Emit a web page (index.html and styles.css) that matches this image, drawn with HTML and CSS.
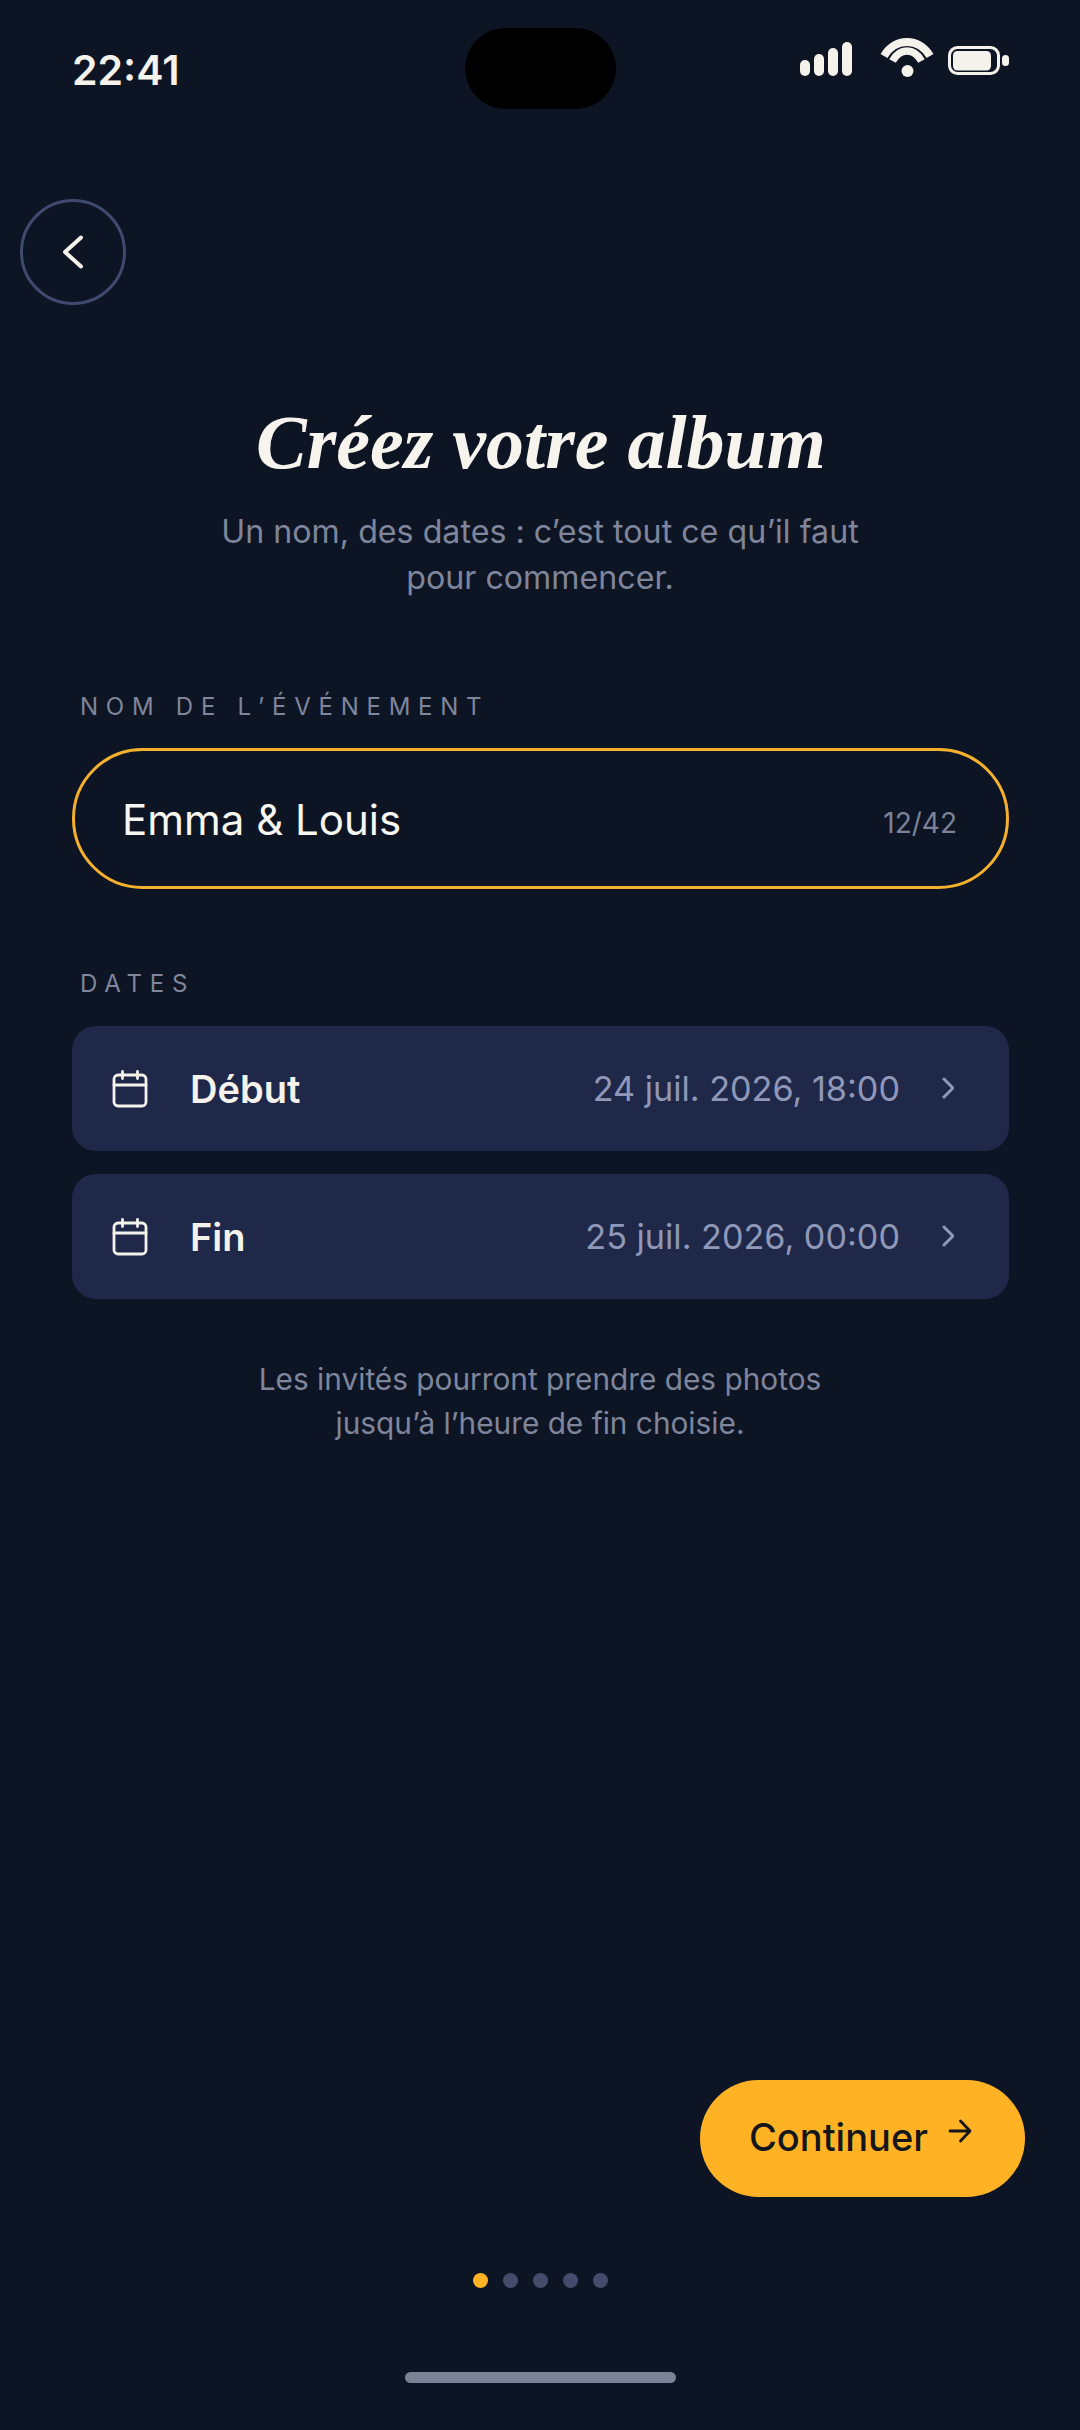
FILE: index.html
```html
<!DOCTYPE html>
<html lang="fr">
<head>
<meta charset="utf-8">
<title>Créez votre album</title>
<link rel="stylesheet" href="styles.css">
</head>
<body>
<main class="screen">
  <header class="status">
    <span class="time">22:41</span>
    <div class="island"></div>
    <div class="status-icons">
      <svg class="ic-signal" width="52" height="34" viewBox="0 0 52 34" fill="#f5f2ec"><rect x="0" y="18" width="10" height="16" rx="5"/><rect x="14" y="12" width="10" height="22" rx="5"/><rect x="28" y="6" width="10" height="28" rx="5"/><rect x="42" y="0" width="10" height="34" rx="5"/></svg>
      <svg class="ic-wifi" width="54" height="40" viewBox="0 0 54 40" fill="none" stroke="#f5f2ec"><path d="M4 18C15 -0.670 39 -0.670 50 18" stroke-width="8"/><path d="M12.500 23C20 9.700 34 9.700 41.500 23" stroke-width="7.500"/><circle cx="27.500" cy="33" r="6" fill="#f5f2ec" stroke="none"/></svg>
      <svg class="ic-batt" width="61" height="29" viewBox="0 0 61 29"><rect x="1.500" y="1.500" width="49" height="26" rx="8" fill="none" stroke="#f5f2ec" stroke-width="3"/><rect x="5" y="5" width="38" height="19.500" rx="4.500" fill="#f5f2ec"/><rect x="54" y="9" width="7" height="11" rx="3.500" fill="#f5f2ec"/></svg>
    </div>
  </header>

  <button class="back" aria-label="Retour">
    <svg width="22" height="36" viewBox="0 0 22 36" fill="none" stroke="#f5f2ec" stroke-width="4" stroke-linecap="round" stroke-linejoin="round"><path d="M19 3.500 3 18l16 14.500"/></svg>
  </button>

  <h1 class="title">Créez votre album</h1>
  <p class="subtitle">Un nom, des dates : c’est tout ce qu’il faut<br>pour commencer.</p>

  <label class="label label-name">NOM DE L’ÉVÉNEMENT</label>
  <div class="field">
    <span class="field-value">Emma &amp; Louis</span>
    <span class="counter">12/42</span>
  </div>

  <label class="label label-dates">DATES</label>
  <div class="rows">
    <div class="row">
      <svg class="cal" width="36" height="38" viewBox="0 0 36 38" fill="none" stroke="#f5f2ec" stroke-width="2.800" stroke-linecap="round" stroke-linejoin="round"><rect x="2" y="5" width="32" height="31" rx="4"/><path d="M2 15h32M10.500 1.500v7M25.500 1.500v7"/></svg>
      <span class="row-name">Début</span>
      <span class="row-value">24 juil. 2026, 18:00</span>
      <svg class="chev" width="12" height="22" viewBox="0 0 12 22" fill="none" stroke="#8f98b8" stroke-width="3" stroke-linecap="round" stroke-linejoin="round"><path d="M2 2l9 9-9 9"/></svg>
    </div>
    <div class="row">
      <svg class="cal" width="36" height="38" viewBox="0 0 36 38" fill="none" stroke="#f5f2ec" stroke-width="2.800" stroke-linecap="round" stroke-linejoin="round"><rect x="2" y="5" width="32" height="31" rx="4"/><path d="M2 15h32M10.500 1.500v7M25.500 1.500v7"/></svg>
      <span class="row-name">Fin</span>
      <span class="row-value">25 juil. 2026, 00:00</span>
      <svg class="chev" width="12" height="22" viewBox="0 0 12 22" fill="none" stroke="#8f98b8" stroke-width="3" stroke-linecap="round" stroke-linejoin="round"><path d="M2 2l9 9-9 9"/></svg>
    </div>
  </div>

  <p class="note">Les invités pourront prendre des photos<br>jusqu’à l’heure de fin choisie.</p>

  <button class="cta">
    <span class="cta-text">Continuer</span>
    <svg class="arrow" width="24" height="24" viewBox="0 0 24 24" fill="none" stroke="#14161c" stroke-width="2.800" stroke-linecap="round" stroke-linejoin="round"><path d="M2 12h20M12.500 2 22 12l-9.500 10"/></svg>
  </button>

  <div class="dots">
    <i class="dot dot-on"></i><i class="dot"></i><i class="dot"></i><i class="dot"></i><i class="dot"></i>
  </div>
  <div class="home"></div>
</main>
</body>
</html>
```

FILE: styles.css
```css
* { box-sizing: border-box; }
html, body { margin: 0; padding: 0; }
body { background: #0d1524; }
.screen {
  width: 1080px;
  height: 2430px;
  background: #0d1524;
  font-family: "Inter", "Liberation Sans", sans-serif;
  color: #f5f2ec;
  display: flex;
  flex-direction: column;
  overflow: hidden;
}
.status {
  height: 199px;
  position: relative;
  display: flex;
  justify-content: space-between;
  align-items: flex-start;
  padding: 0 71px 0 72px;
}
.time {
  font-size: 41px;
  font-weight: 600;
  line-height: 47px;
  margin-top: 47px;
}
.island {
  position: absolute;
  left: 465px;
  top: 28px;
  width: 151px;
  height: 81px;
  border-radius: 41px;
  background: #000;
}
.status-icons {
  display: flex;
  align-items: flex-start;
  margin-top: 38px;
}
.ic-signal { margin-top: 4px; margin-right: 28px; }
.ic-wifi { margin-right: 14px; }
.ic-batt { margin-top: 8px; }
.back {
  align-self: flex-start;
  margin-left: 20px;
  width: 106px;
  height: 106px;
  padding: 0;
  border-radius: 50%;
  border: 3px solid #3f4a6e;
  background: transparent;
  display: flex;
  align-items: center;
  justify-content: center;
}
.title {
  margin: 97px 0 0;
  padding-left: 2px;
  text-align: center;
  font-family: "Liberation Serif", serif;
  font-style: italic;
  font-weight: 700;
  font-size: 76px;
  line-height: 80px;
  color: #f7f4ee;
}
.subtitle {
  margin: 26.500px 0 0;
  text-align: center;
  font-size: 32.200px;
  line-height: 46.500px;
  color: #7f859b;
}
.label {
  display: block;
  margin-left: 80px;
  font-size: 24px;
  line-height: 30px;
  letter-spacing: 7.750px;
  color: #7f859b;
}
.label-name { margin-top: 90.500px; }
.label-dates { margin-top: 80px; }
.field {
  margin: 26px 71px 0 72px;
  height: 141px;
  border: 3px solid #f5b02e;
  border-radius: 71px;
  display: flex;
  justify-content: space-between;
  align-items: center;
  padding: 0 49px 0 47px;
}
.field-value {
  font-size: 42px;
  margin-top: 1px;
  color: #f8f6f1;
}
.counter {
  font-size: 28px;
  color: #7c8298;
  margin-top: 9px;
}
.rows {
  margin: 27px 71px 0 72px;
  display: flex;
  flex-direction: column;
  gap: 23px;
}
.row {
  height: 125px;
  border-radius: 24px;
  background: #1f2849;
  display: flex;
  align-items: center;
  padding: 0 55px 0 40px;
}
.cal { flex: none; }
.row-name {
  margin-left: 42px;
  font-size: 38px;
  font-weight: 600;
}
.row-value {
  margin-left: auto;
  font-size: 34.200px;
  color: #8f98b8;
}
.chev { margin: -2px 0 0 42px; flex: none; }
.note {
  margin: 58px 0 0;
  text-align: center;
  font-size: 29.800px;
  line-height: 44px;
  color: #7f859b;
}
.cta {
  align-self: flex-end;
  margin: 635px 55px 0 0;
  width: 325px;
  height: 117px;
  border: 0;
  border-radius: 59px;
  background: #ffb224;
  color: #14161c;
  font-family: inherit;
  font-size: 38px;
  font-weight: 500;
  display: flex;
  align-items: center;
  justify-content: flex-start;
  padding: 0 0 0 49px;
}
.cta-text { margin-top: -3px; }
.arrow { margin: -15px 0 0 20px; }
.dots {
  margin-top: 76px;
  display: flex;
  justify-content: center;
  gap: 15px;
}
.dot {
  width: 15px;
  height: 15px;
  border-radius: 50%;
  background: #434c6c;
}
.dot-on { background: #ffb224; }
.home {
  margin: 84px auto 0;
  width: 271px;
  height: 11px;
  border-radius: 6px;
  background: #7c8296;
}
```
